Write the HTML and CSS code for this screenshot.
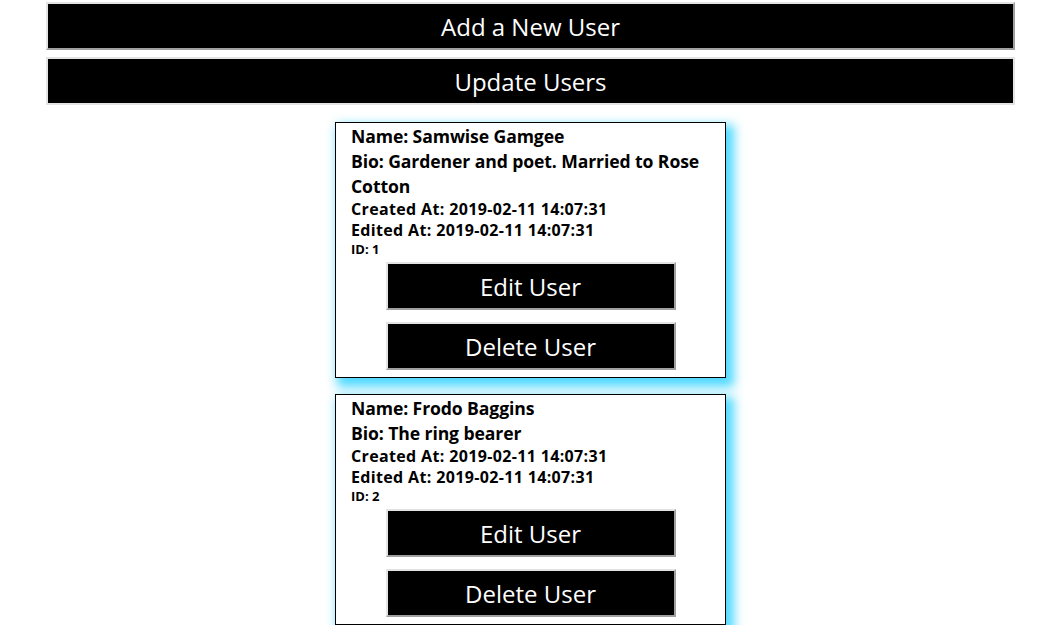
FILE: index.html
```html
<!DOCTYPE html>
<html>
<head>
<meta charset="utf-8">
<link rel="stylesheet" href="styles.css">
</head>
<body>
<div class="app">
  <button class="top-btn first">Add a New User</button>
  <button class="top-btn second">Update Users</button>
  <div class="list">
    <div class="card">
      <div class="big">Name: Samwise Gamgee</div>
      <div class="big">Bio: Gardener and poet. Married to Rose Cotton</div>
      <div class="mid">Created At: 2019-02-11 14:07:31</div>
      <div class="mid">Edited At: 2019-02-11 14:07:31</div>
      <div class="small">ID: 1</div>
      <div class="actions">
        <button class="card-btn">Edit User</button>
        <button class="card-btn">Delete User</button>
      </div>
    </div>
    <div class="card">
      <div class="big">Name: Frodo Baggins</div>
      <div class="big">Bio: The ring bearer</div>
      <div class="mid">Created At: 2019-02-11 14:07:31</div>
      <div class="mid">Edited At: 2019-02-11 14:07:31</div>
      <div class="small">ID: 2</div>
      <div class="actions">
        <button class="card-btn">Edit User</button>
        <button class="card-btn">Delete User</button>
      </div>
    </div>
  </div>
</div>
</body>
</html>
```
FILE: styles.css
```css
html, body {
  margin: 0;
  padding: 0;
  background: #fff;
  overflow: hidden;
}
body {
  font-family: "Open Sans", "Noto Sans", sans-serif;
}
.app {
  padding: 2px 34px 0 46px;
}
button {
  font-family: "Open Sans", "Noto Sans", sans-serif;
  background: #000;
  color: #fff;
  cursor: pointer;
  padding: 0;
  margin: 0;
  box-sizing: border-box;
}
.top-btn {
  display: block;
  width: 100%;
  height: 48px;
  font-size: 24px;
  border: 2px solid #e3e3e3;
}
.top-btn.first {
  border-right-color: #a0a0a0;
  border-bottom-color: #a0a0a0;
  margin-bottom: 7px;
}
.list {
  display: flex;
  flex-direction: column;
  align-items: center;
  gap: 16px;
  padding-top: 17px;
}
.card {
  width: 359px;
  border: 1px solid #000;
  padding: 1px 15px 7px 15px;
  box-shadow: 5px 6px 10px 3px rgba(70, 215, 255, 0.95);
  background: #fff;
  color: #000;
  font-weight: 700;
}
.big {
  font-size: 17.6px;
  line-height: 25px;
  letter-spacing: -0.1px;
}
.mid {
  font-size: 16px;
  line-height: 21px;
  letter-spacing: 0.35px;
}
.small {
  font-size: 13px;
  line-height: 16px;
}
.actions {
  display: flex;
  flex-direction: column;
  align-items: center;
  gap: 12px;
  margin-top: 5px;
}
.card-btn {
  width: 290px;
  height: 48px;
  font-size: 24px;
  border: 2px solid #e3e3e3;
  border-right-color: #a0a0a0;
  border-bottom-color: #a0a0a0;
}
```
